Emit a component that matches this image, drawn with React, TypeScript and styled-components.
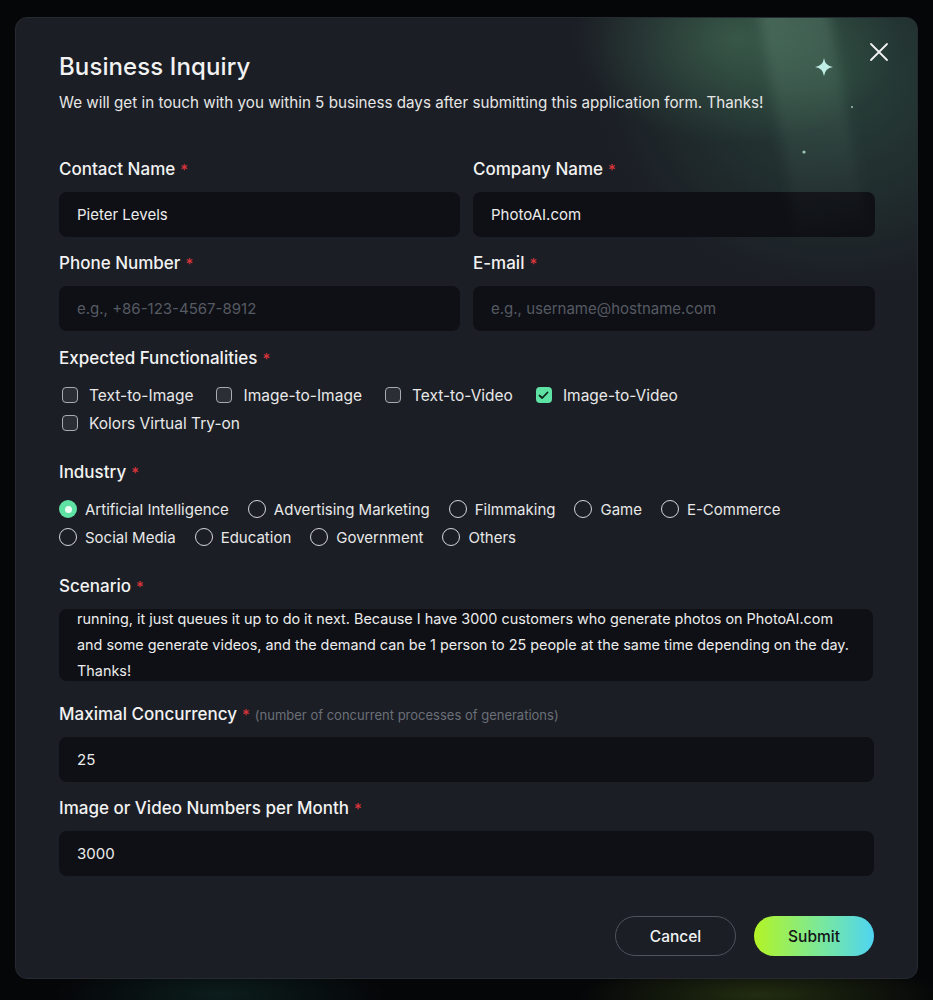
import styled, { createGlobalStyle } from 'styled-components';

const GlobalStyle = createGlobalStyle`
  html, body {
    margin: 0;
    padding: 0;
    background: #050608;
    font-family: Inter, "Noto Sans", sans-serif;
  }
  * { box-sizing: border-box; }
`;

const Page = styled.div`
  width: 933px;
  height: 1000px;
  padding: 17px 15px 0 15px;
  background:
    radial-gradient(ellipse 260px 50px at 760px 995px, rgba(120, 160, 40, 0.25), transparent 70%),
    radial-gradient(ellipse 240px 50px at 220px 995px, rgba(40, 120, 110, 0.2), transparent 70%),
    #050608;
`;

const Modal = styled.div`
  position: relative;
  width: 903px;
  height: 962px;
  border-radius: 12px;
  border: 1px solid #262b31;
  overflow: hidden;
  padding: 32px 43px 0 43px;
  background:
    radial-gradient(ellipse 220px 140px at 720px 20px, rgba(90, 150, 110, 0.38), transparent 75%),
    radial-gradient(ellipse 320px 280px at 820px 60px, rgba(60, 120, 90, 0.38), transparent 75%),
    linear-gradient(#1b1e25, #1b1e25);
  color: #f2f2f2;
`;

const Beam = styled.div`
  position: absolute;
  top: -40px;
  left: 760px;
  width: 70px;
  height: 260px;
  transform: rotate(-10deg);
  background: linear-gradient(180deg, rgba(160, 210, 180, 0.2), rgba(160, 210, 180, 0));
  filter: blur(6px);
  pointer-events: none;
`;

const Sparkle = styled.svg`
  position: absolute;
  pointer-events: none;
`;

const CloseButton = styled.button`
  position: absolute;
  top: 22px;
  right: 26px;
  width: 24px;
  height: 24px;
  padding: 0;
  border: none;
  background: none;
  cursor: pointer;
`;

const Title = styled.h1`
  margin: 0;
  font-size: 24px;
  font-weight: 500;
  line-height: 34px;
  letter-spacing: 0.1px;
`;

const Subtitle = styled.p`
  margin: 7px 0 0 0;
  font-size: 15.2px;
  line-height: 24px;
  color: #e6e6e6;
`;

const Grid = styled.div`
  display: grid;
  grid-template-columns: 401px 402px;
  column-gap: 13px;
  margin-top: 42px;
`;

const Field = styled.div<{ $mt?: number }>`
  display: flex;
  flex-direction: column;
  margin-top: ${p => p.$mt ?? 0}px;
`;

const Label = styled.div`
  display: flex;
  align-items: baseline;
  font-size: 17px;
  line-height: 24px;
  font-weight: 500;
  color: #f2f2f2;
  margin-bottom: 10px;
`;

const Star = styled.span`
  color: #d9343a;
  margin-left: 5px;
  font-size: 15px;
`;

const Hint = styled.span`
  color: #6b6f77;
  font-size: 13px;
  font-weight: 400;
  margin-left: 5px;
`;

const Input = styled.div<{ $placeholder?: boolean }>`
  height: 45px;
  border-radius: 8px;
  background: #0e1016;
  padding: 0 18px;
  display: flex;
  align-items: center;
  font-size: 15px;
  color: ${p => (p.$placeholder ? '#565a62' : '#ececec')};
`;

const TextArea = styled.div`
  height: 72px;
  width: 814px;
  border-radius: 8px;
  background: #0e1016;
  padding: 0 18px;
  overflow: hidden;
  font-size: 14.4px;
  line-height: 26px;
  color: #ececec;
`;

const TextInner = styled.div`
  margin-top: -3px;
`;

const OptionWrap = styled.div<{ $gap: number }>`
  display: flex;
  flex-wrap: wrap;
  column-gap: ${p => p.$gap}px;
  row-gap: 0;
  width: 780px;
`;

const Option = styled.label<{ $indent?: number; $size: number }>`
  display: flex;
  align-items: center;
  height: 28px;
  font-size: ${p => p.$size}px;
  color: #e8e8e8;
  padding-left: ${p => p.$indent ?? 0}px;
`;

const Box = styled.span<{ $checked?: boolean }>`
  width: 16px;
  height: 16px;
  border-radius: 4px;
  margin-right: 11px;
  display: flex;
  align-items: center;
  justify-content: center;
  border: ${p => (p.$checked ? 'none' : '1.5px solid #a8abb1')};
  background: ${p => (p.$checked ? '#5fe3a5' : '#2b2e35')};
`;

const Radio = styled.span<{ $checked?: boolean }>`
  width: 18px;
  height: 18px;
  border-radius: 50%;
  margin-right: 8px;
  display: flex;
  align-items: center;
  justify-content: center;
  border: ${p => (p.$checked ? 'none' : '1.3px solid #d4d6da')};
  background: ${p => (p.$checked ? '#5fe3a5' : 'transparent')};
  &::after {
    content: '';
    display: ${p => (p.$checked ? 'block' : 'none')};
    width: 7px;
    height: 7px;
    border-radius: 50%;
    background: #eafff4;
  }
`;

const Footer = styled.div`
  display: flex;
  justify-content: flex-end;
  gap: 18px;
  margin-top: 40px;
`;

const Button = styled.button<{ $primary?: boolean }>`
  height: 40px;
  width: ${p => (p.$primary ? 120 : 121)}px;
  border-radius: 20px;
  font-family: inherit;
  font-size: 15.5px;
  font-weight: 500;
  cursor: pointer;
  border: ${p => (p.$primary ? 'none' : '1px solid #4e535b')};
  color: ${p => (p.$primary ? '#121418' : '#f2f2f2')};
  background: ${p => (p.$primary ? 'linear-gradient(90deg, #b3f425 0%, #7be89a 55%, #4fd4f2 100%)' : 'transparent')};
`;

const functionalities = [
  { name: 'Text-to-Image', checked: false },
  { name: 'Image-to-Image', checked: false },
  { name: 'Text-to-Video', checked: false },
  { name: 'Image-to-Video', checked: true },
  { name: 'Kolors Virtual Try-on', checked: false },
];

const industries = [
  'Artificial Intelligence',
  'Advertising Marketing',
  'Filmmaking',
  'Game',
  'E-Commerce',
  'Social Media',
  'Education',
  'Government',
  'Others',
];

const Required = ({ children, hint }: { children: string; hint?: string }) => (
  <Label>
    {children}
    <Star>*</Star>
    {hint && <Hint>{hint}</Hint>}
  </Label>
);

const App = () => {
  return (
    <>
      <GlobalStyle />
      <Page>
        <Modal>
          <Beam />
          <Sparkle width="22" height="22" viewBox="0 0 22 22" style={{ left: 797, top: 38 }}>
            <path d="M11 2 Q12 10 20 11 Q12 12 11 20 Q10 12 2 11 Q10 10 11 2Z" fill="#bfeee6" />
          </Sparkle>
          <Sparkle width="6" height="6" viewBox="0 0 6 6" style={{ left: 785, top: 131 }}>
            <circle cx="3" cy="3" r="1.6" fill="#9fc7b4" />
          </Sparkle>
          <Sparkle width="4" height="4" viewBox="0 0 4 4" style={{ left: 834, top: 87 }}>
            <circle cx="2" cy="2" r="1" fill="#9fc7b4" />
          </Sparkle>
          <CloseButton aria-label="Close">
            <svg width="24" height="24" viewBox="0 0 24 24">
              <path d="M4 4 L20 20 M20 4 L4 20" stroke="#f2f2f2" strokeWidth="1.8" strokeLinecap="round" />
            </svg>
          </CloseButton>

          <Title>Business Inquiry</Title>
          <Subtitle>
            We will get in touch with you within 5 business days after submitting this application form. Thanks!
          </Subtitle>

          <Grid>
            <Field>
              <Required>Contact Name</Required>
              <Input>Pieter Levels</Input>
            </Field>
            <Field>
              <Required>Company Name</Required>
              <Input>PhotoAI.com</Input>
            </Field>
            <Field $mt={14}>
              <Required>Phone Number</Required>
              <Input $placeholder>e.g., +86-123-4567-8912</Input>
            </Field>
            <Field $mt={14}>
              <Required>E-mail</Required>
              <Input $placeholder>e.g., username@hostname.com</Input>
            </Field>
          </Grid>

          <Field $mt={15}>
            <Required>Expected Functionalities</Required>
            <OptionWrap $gap={20}>
              {functionalities.map(f => (
                <Option key={f.name} $indent={3} $size={15.5}>
                  <Box $checked={f.checked}>
                    {f.checked && (
                      <svg width="11" height="9" viewBox="0 0 11 9">
                        <path d="M1.5 4.5 L4.2 7 L9.5 1.5" stroke="#10241b" strokeWidth="1.8" fill="none" strokeLinecap="round" strokeLinejoin="round" />
                      </svg>
                    )}
                  </Box>
                  {f.name}
                </Option>
              ))}
            </OptionWrap>
          </Field>

          <Field $mt={23}>
            <Required>Industry</Required>
            <OptionWrap $gap={19}>
              {industries.map((name, i) => (
                <Option key={name} $size={15}>
                  <Radio $checked={i === 0} />
                  {name}
                </Option>
              ))}
            </OptionWrap>
          </Field>

          <Field $mt={23}>
            <Required>Scenario</Required>
            <TextArea>
              <TextInner>
                running, it just queues it up to do it next. Because I have 3000 customers who generate photos on PhotoAI.com
                and some generate videos, and the demand can be 1 person to 25 people at the same time depending on the day.
                Thanks!
              </TextInner>
            </TextArea>
          </Field>

          <Field $mt={21}>
            <Required hint="(number of concurrent processes of generations)">Maximal Concurrency</Required>
            <Input>25</Input>
          </Field>

          <Field $mt={14}>
            <Required>Image or Video Numbers per Month</Required>
            <Input>3000</Input>
          </Field>

          <Footer>
            <Button>Cancel</Button>
            <Button $primary>Submit</Button>
          </Footer>
        </Modal>
      </Page>
    </>
  );
};

export default App;
